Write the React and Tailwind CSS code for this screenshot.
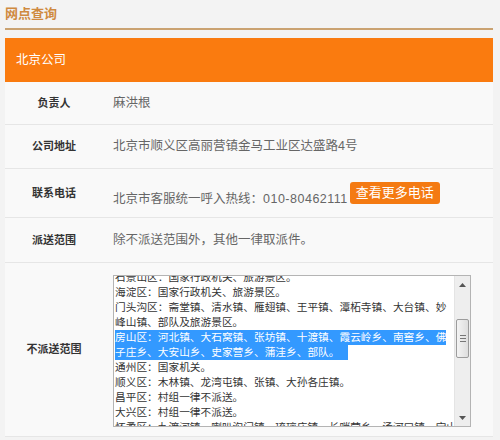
import React from "react";

const FONT = { fontFamily: '"Liberation Sans", "Noto Sans CJK SC", sans-serif' };

const lines = [
  { text: "石景山区：国家行政机关、旅游景区。" },
  { text: "海淀区：国家行政机关、旅游景区。" },
  { text: "门头沟区：斋堂镇、清水镇、雁翅镇、王平镇、潭柘寺镇、大台镇、妙" },
  { text: "峰山镇、部队及旅游景区。" },
  { text: "房山区：河北镇、大石窝镇、张坊镇、十渡镇、霞云岭乡、南窖乡、佛", selected: true },
  { text: "子庄乡、大安山乡、史家营乡、蒲洼乡、部队。", selected: true, tail: true },
  { text: "通州区：国家机关。" },
  { text: "顺义区：木林镇、龙湾屯镇、张镇、大孙各庄镇。" },
  { text: "昌平区：村组一律不派送。" },
  { text: "大兴区：村组一律不派送。" },
  { text: "怀柔区：九渡河镇、喇叭沟门镇、琉璃庙镇、长哨营乡、汤河口镇、宝山" },
];

function Row({ label, children, className = "" }) {
  return (
    <div className={`flex border-b border-[#e6e6e6] ${className}`}>
      <div className="w-[98px] shrink-0 flex items-center justify-center text-[11px] font-bold text-[#333]">
        {label}
      </div>
      <div className="flex-1 flex items-center pl-[10px] text-[12.5px] text-[#666]">
        {children}
      </div>
    </div>
  );
}

function Arrow({ up }) {
  return (
    <div className="h-[17px] flex items-center justify-center">
      <svg width="7" height="4" viewBox="0 0 7 4">
        {up ? (
          <path d="M0 4 L3.5 0 L7 4 Z" fill="#555" />
        ) : (
          <path d="M0 0 L3.5 4 L7 0 Z" fill="#555" />
        )}
      </svg>
    </div>
  );
}

function FakeTextarea() {
  return (
    <div className="w-[358px] h-[152px] border border-[#b4b4b4] bg-white flex">
      <div className="flex-1 overflow-hidden p-[1px] text-[10.7px] leading-[15px] text-[#333]">
        <div className="-mt-[7px]">
          {lines.map((l, i) => (
            <div key={i} className="h-[15px] whitespace-nowrap">
              {l.selected ? (
                <span className={`inline-block h-[15px] bg-[#3399ff] text-white ${l.tail ? "pr-[9px]" : ""}`}>
                  {l.text}
                </span>
              ) : (
                l.text
              )}
            </div>
          ))}
        </div>
      </div>
      <div className="w-[16px] shrink-0 bg-[#eeeeee] border-l border-[#e4e4e4] flex flex-col">
        <Arrow up />
        <div className="flex-1">
          <div className="mt-[26px] mx-[1px] h-[39px] rounded-[2px] border border-[#9c9c9c] bg-gradient-to-r from-[#f4f4f4] to-[#dedede] flex flex-col items-center justify-center gap-[2px]">
            <div className="w-[6px] h-[1px] bg-[#777]" />
            <div className="w-[6px] h-[1px] bg-[#777]" />
            <div className="w-[6px] h-[1px] bg-[#777]" />
          </div>
        </div>
        <Arrow />
      </div>
    </div>
  );
}

export default function App() {
  return (
    <div className="w-[500px] h-[440px] overflow-hidden bg-[#f3f3f3]" style={FONT}>
      <div className="pl-[5px] pr-[7px]">
        <div className="h-[28px] flex items-center text-[13px] font-bold text-[#cf8a40]">
          网点查询
        </div>
        <div className="h-[2px] bg-[#caa271]" />
        <div className="h-[8px]" />
        <div className="h-[44px] bg-[#fa7b0f] flex items-center pl-[11px] text-[12.5px] text-white">
          北京公司
        </div>
        <div className="bg-[#f9f9f9]">
          <Row label="负责人" className="h-[43px]">
            麻洪根
          </Row>
          <Row label="公司地址" className="h-[44px]">
            北京市顺义区高丽营镇金马工业区达盛路4号
          </Row>
          <Row label="联系电话" className="h-[49px]">
            <span className="pt-[13px]">
              北京市客服统一呼入热线：<span className="tracking-[0.5px]">010-80462111</span>
            </span>
            <button className="ml-[2px] h-[22px] px-[6px] rounded-[3px] bg-[#f47a12] text-white text-[13px] leading-[22px]">
              查看更多电话
            </button>
          </Row>
          <Row label="派送范围" className="h-[45px]">
            除不派送范围外，其他一律取派件。
          </Row>
          <div className="flex h-[174px] border-b border-[#e6e6e6]">
            <div className="w-[98px] shrink-0 flex items-center justify-center text-[11px] font-bold text-[#333]">
              不派送范围
            </div>
            <div className="flex-1 pl-[10px] pt-[12px]">
              <FakeTextarea />
            </div>
          </div>
        </div>
      </div>
    </div>
  );
}
